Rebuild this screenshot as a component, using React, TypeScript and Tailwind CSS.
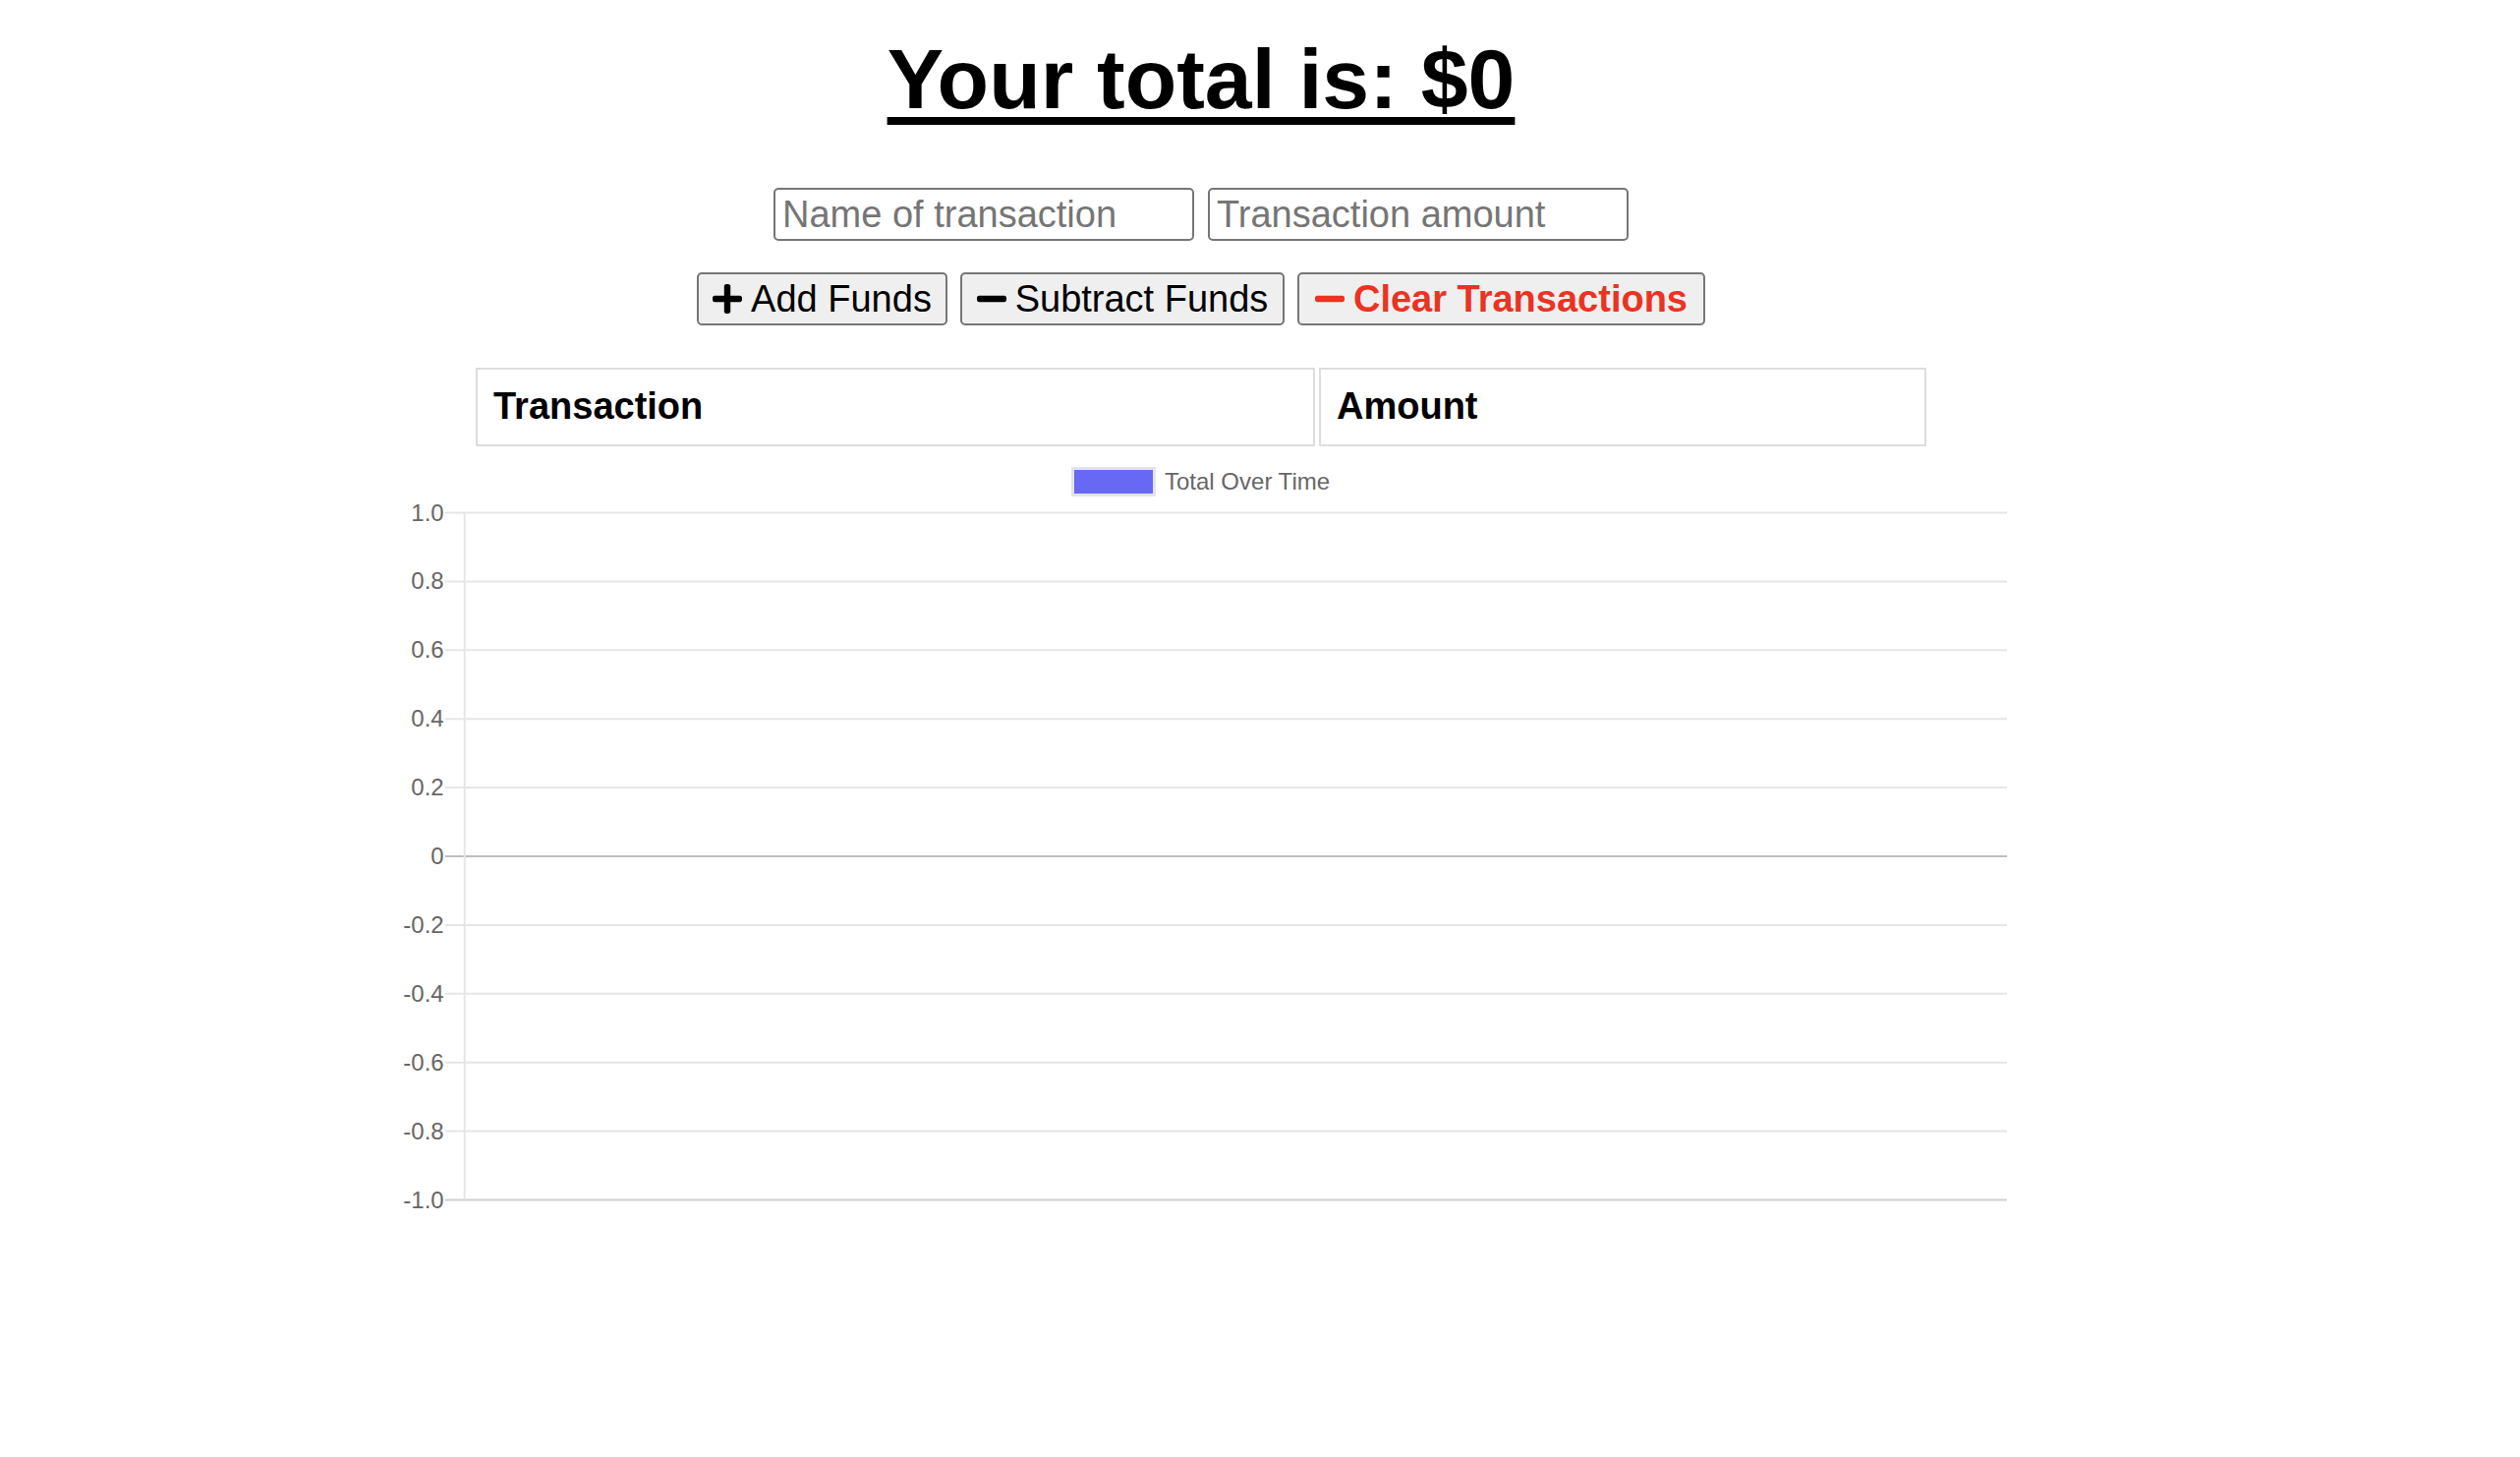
import React from "react";

const yTicks = ["1.0", "0.8", "0.6", "0.4", "0.2", "0", "-0.2", "-0.4", "-0.6", "-0.8", "-1.0"];

function PlusIcon() {
  return (
    <svg viewBox="0 32 448 448" className="h-[30px] w-[30px] shrink-0" fill="currentColor">
      <path d="M416 208H272V64c0-17.670-14.330-32-32-32h-32c-17.670 0-32 14.330-32 32v144H32c-17.670 0-32 14.330-32 32v32c0 17.670 14.330 32 32 32h144v144c0 17.670 14.330 32 32 32h32c17.670 0 32-14.330 32-32V304h144c17.670 0 32-14.330 32-32v-32c0-17.670-14.330-32-32-32z" />
    </svg>
  );
}

function MinusIcon() {
  return (
    <svg viewBox="0 32 448 448" className="h-[30px] w-[30px] shrink-0" fill="currentColor">
      <path d="M416 208H32c-17.670 0-32 14.330-32 32v32c0 17.670 14.330 32 32 32h384c17.670 0 32-14.330 32-32v-32c0-17.670-14.330-32-32-32z" />
    </svg>
  );
}

function TotalChart() {
  const top = 67.5;
  const step = 69.9;
  const axisX = 70.7;
  const right = 1640;

  return (
    <svg width="1640" height="820" className="block font-['Liberation_Sans',Arial,sans-serif]">
      {/* legend */}
      <rect x="689.5" y="22.5" width="83" height="27" fill="#6769f4" stroke="#e4e4e4" strokeWidth="3" />
      <text x="783" y="44" fontSize="24" fill="#666666">
        Total Over Time
      </text>

      {/* grid */}
      {yTicks.map((label, i) => {
        const y = top + i * step;
        const stroke = label === "0" ? "#bfbfbf" : i === yTicks.length - 1 ? "#cfcfcf" : "#e6e6e6";
        return (
          <g key={label}>
            <line x1={axisX - 20} x2={right} y1={y} y2={y} stroke={stroke} strokeWidth="2" />
            <text x={axisX - 21} y={y + 8} fontSize="24" fill="#666666" textAnchor="end">
              {label}
            </text>
          </g>
        );
      })}
      <line x1={axisX} x2={axisX} y1={top} y2={top + 10 * step} stroke="#e6e6e6" strokeWidth="2" />
    </svg>
  );
}

export default function App() {
  return (
    <div className="min-h-[1482px] w-full bg-white font-['Liberation_Sans',Arial,sans-serif] text-black">
      <div className="flex w-[2444px] flex-col items-center">
        <h1 className="mt-[37px] text-[86px] font-bold leading-none underline decoration-[8px] underline-offset-[9px]">
          Your total is: $0
        </h1>

        <div className="mt-[68px] flex gap-[14px]">
          <input
            type="text"
            placeholder="Name of transaction"
            className="h-[54px] w-[428px] rounded-[5px] border-2 border-[#767676] px-[7px] text-[38px] outline-none placeholder:text-[#757575]"
          />
          <input
            type="number"
            placeholder="Transaction amount"
            className="h-[54px] w-[428px] rounded-[5px] border-2 border-[#767676] px-[7px] text-[38px] outline-none placeholder:text-[#757575]"
          />
        </div>

        <div className="mt-[32px] flex gap-[13px]">
          <button
            type="button"
            className="flex h-[54px] w-[255px] items-center justify-center gap-[9px] rounded-[5px] border-2 border-[#767676] bg-[#efefef] text-[38px] leading-none"
          >
            <PlusIcon />
            <span>Add Funds</span>
          </button>
          <button
            type="button"
            className="flex h-[54px] w-[330px] items-center justify-center gap-[9px] rounded-[5px] border-2 border-[#767676] bg-[#efefef] text-[38px] leading-none"
          >
            <MinusIcon />
            <span>Subtract Funds</span>
          </button>
          <button
            type="button"
            className="flex h-[54px] w-[415px] items-center justify-center gap-[9px] rounded-[5px] border-2 border-[#767676] bg-[#efefef] text-[38px] font-bold leading-none text-[#ea3323]"
          >
            <MinusIcon />
            <span>Clear Transactions</span>
          </button>
        </div>

        <div className="mt-[43px] flex gap-[4px]">
          <div className="flex h-[80px] w-[854px] items-center border-2 border-[#dddddd] px-[16px] pb-[1px] text-[38px] font-bold">
            Transaction
          </div>
          <div className="flex h-[80px] w-[618px] items-center border-2 border-[#dddddd] px-[16px] pb-[1px] text-[38px] font-bold">
            Amount
          </div>
        </div>

        <TotalChart />
      </div>
    </div>
  );
}
